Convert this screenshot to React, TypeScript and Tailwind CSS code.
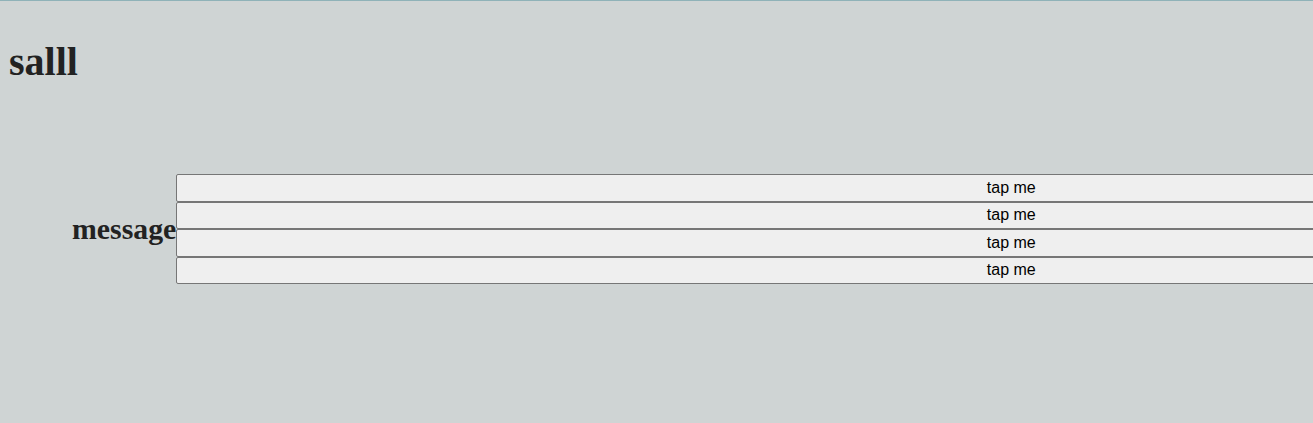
export default function App() {
  const buttons = [0, 1, 2, 3];
  return (
    <div className="min-h-screen w-full overflow-hidden bg-[#cfd4d4] border-t border-[#8fb2b8]">
      <h1
        className="mt-[38px] pl-[9px] text-[40px] font-bold leading-[46px] text-[#222222]"
        style={{ fontFamily: '"Liberation Serif", "Times New Roman", serif' }}
      >
        salll
      </h1>
      <div className="mt-[89px] flex items-center pl-[72px]">
        <span
          className="shrink-0 text-[29.8px] font-bold leading-[34px] text-[#222222]"
          style={{ fontFamily: '"Liberation Serif", "Times New Roman", serif' }}
        >
          message
        </span>
        <div className="flex w-[1670px] shrink-0 flex-col">
          {buttons.map((i) => (
            <button
              key={i}
              className="h-[27.5px] w-full rounded-[2px] border border-[#767676] bg-[#efefef] text-[16px] leading-[18px] text-black"
              style={{ fontFamily: '"Liberation Sans", Arial, sans-serif' }}
            >
              tap me
            </button>
          ))}
        </div>
      </div>
    </div>
  );
}
